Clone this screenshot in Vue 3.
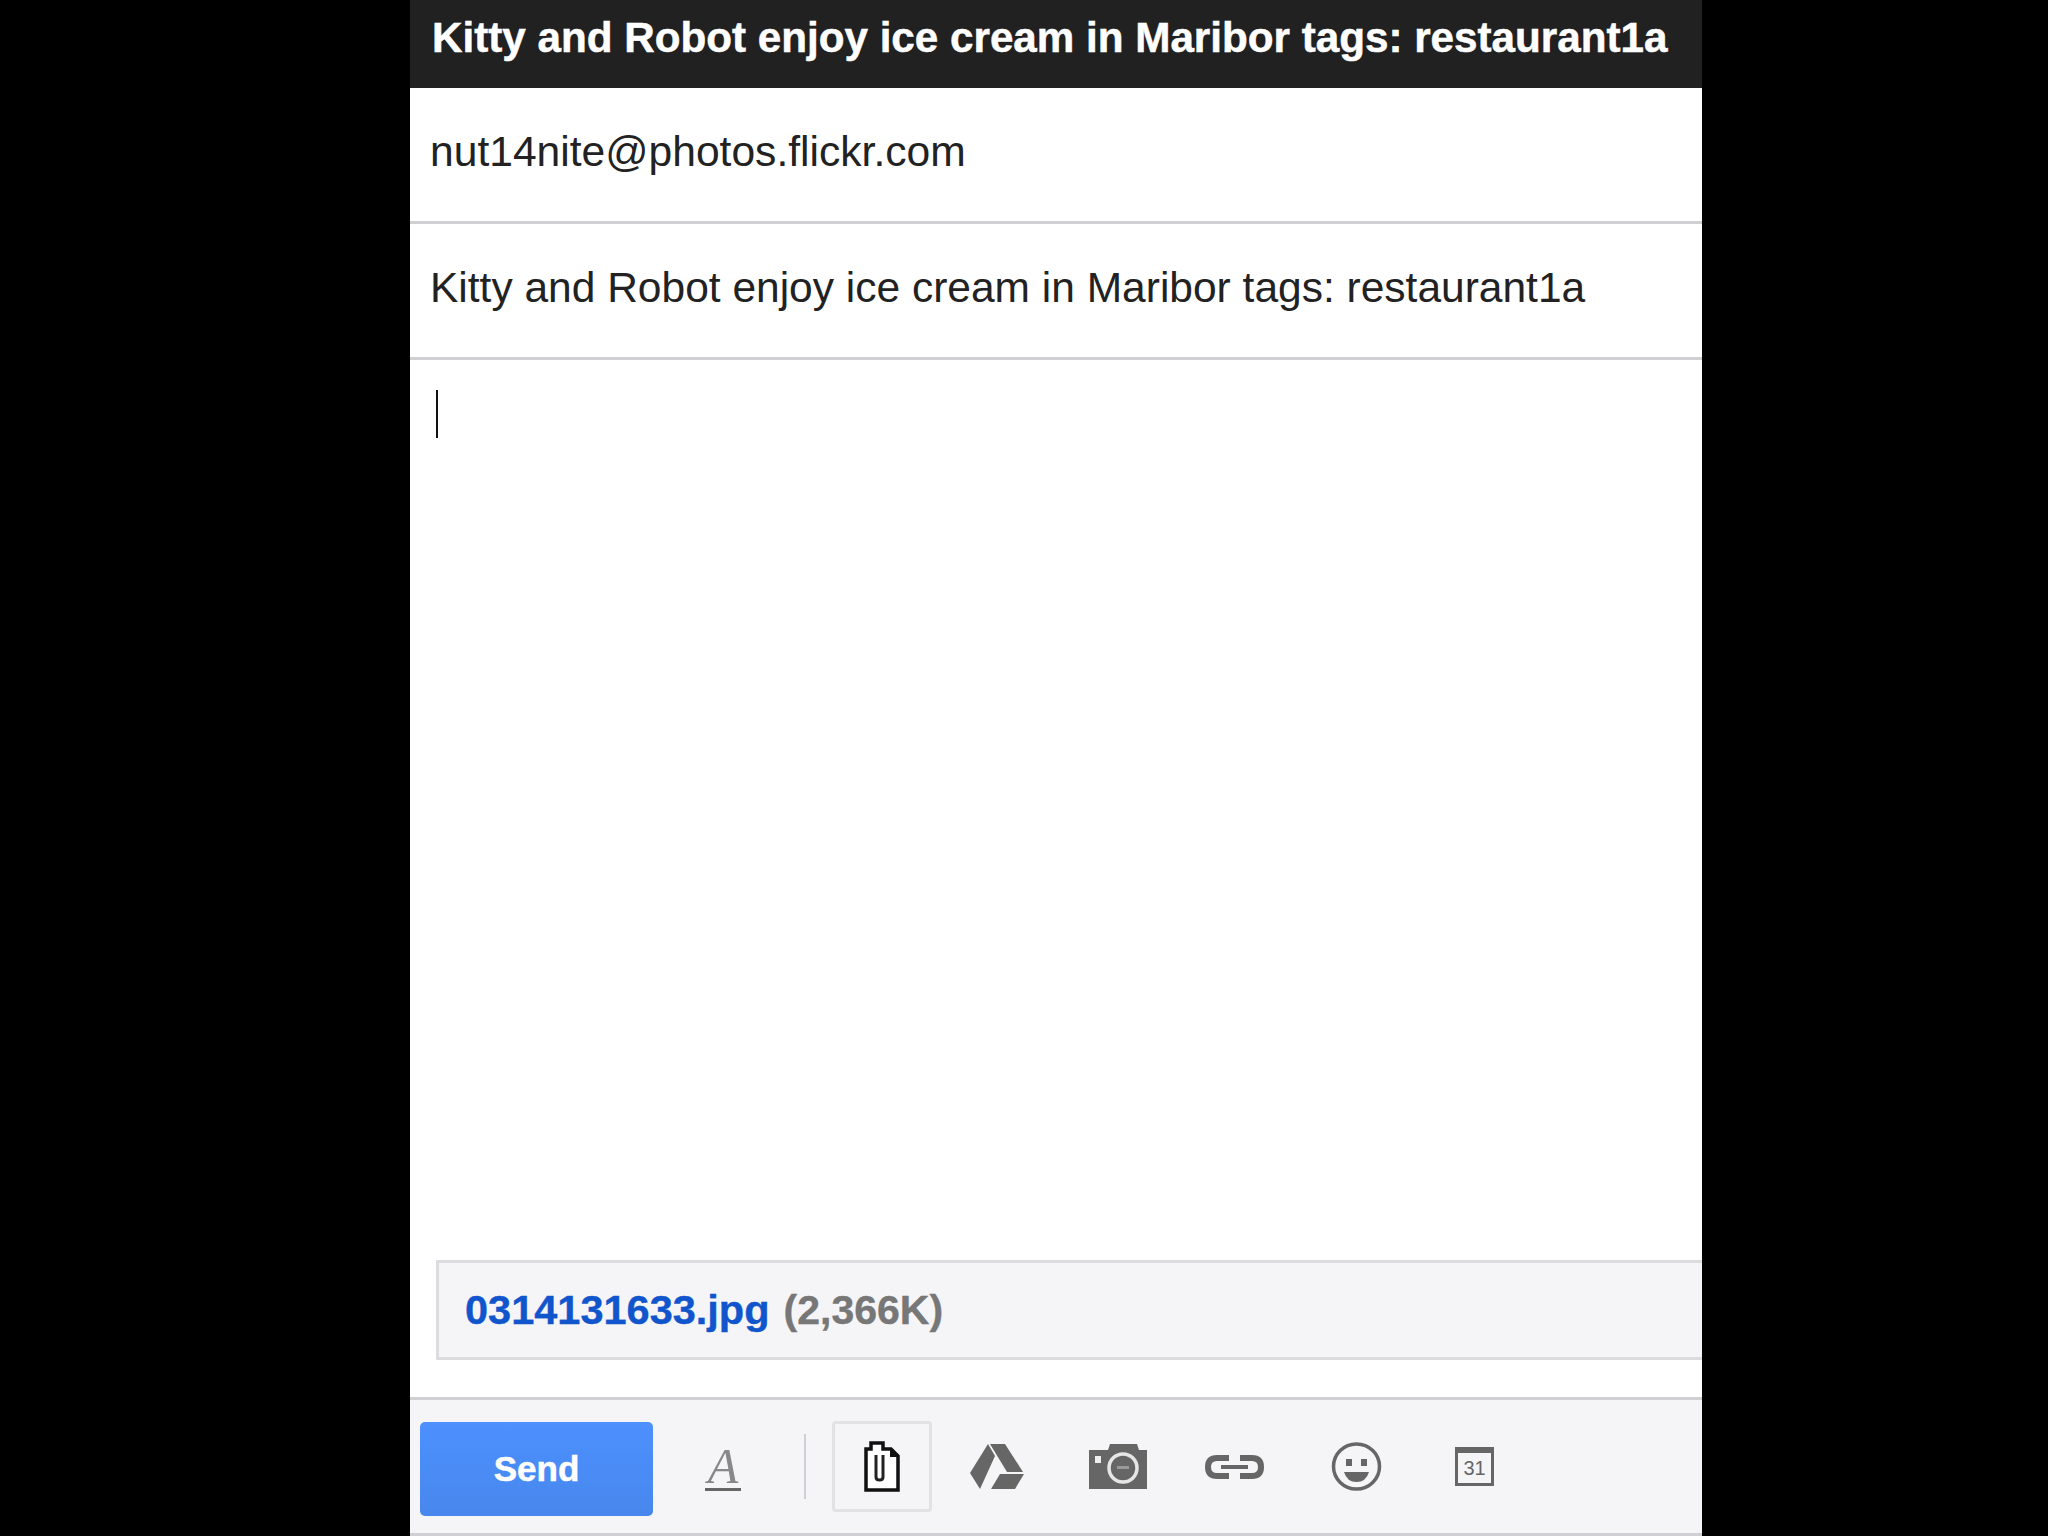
<script setup>
const title = 'Kitty and Robot enjoy ice cream in Maribor tags: restaurant1a';
const recipient = 'nut14nite@photos.flickr.com';
</script>

<template>
  <div class="compose">
    <div class="title-bar">{{ title }}</div>
    <div class="field">{{ recipient }}</div>
    <div class="field">{{ title }}</div>

    <div class="body">
      <div class="caret"></div>
      <div class="attachment">
        <span class="file-name">0314131633.jpg</span>
        <span class="file-size">(2,366K)</span>
      </div>
    </div>

    <div class="toolbar">
      <button class="send">Send</button>
      <div class="format"><span class="format-a">A</span></div>
      <div class="divider"></div>
      <div class="attach-btn">
        <svg width="36" height="51" viewBox="0 0 36 51">
          <path d="M2 8H7V2H19V8H27L34 15V49H2Z" fill="#fff" stroke="#111" stroke-width="3.5" />
          <path d="M26 7V16H35" fill="#111" />
          <path d="M12 14V36Q12 39 15.5 39Q19 39 19 36V14" fill="none" stroke="#222" stroke-width="3" />
        </svg>
      </div>

      <svg class="ic drive" width="54" height="45" viewBox="0 0 54 45">
        <path d="M18 0L25 12L10 45L0 29Z" fill="#666" />
        <path d="M20 0H35L53 28H37Z" fill="#666" />
        <path d="M21 45L30 30H54L45 45Z" fill="#666" />
      </svg>

      <svg class="ic camera" width="58" height="45" viewBox="0 0 58 45">
        <path d="M0 6H19L21 0H48L50 6H58V45H0Z" fill="#666" />
        <rect x="6" y="12" width="6" height="7" fill="#eee" />
        <circle cx="34" cy="24" r="14" fill="#666" stroke="#e6e6e6" stroke-width="3.5" />
        <rect x="28" y="22" width="12" height="3" fill="#999" />
      </svg>

      <svg class="ic link" width="59" height="24" viewBox="0 0 59 24">
        <path d="M24 3H12Q3 3 3 12Q3 21 12 21H24" fill="none" stroke="#666" stroke-width="6" />
        <path d="M35 3H47Q56 3 56 12Q56 21 47 21H35" fill="none" stroke="#666" stroke-width="6" />
        <rect x="16" y="10" width="27" height="4" fill="#666" />
      </svg>

      <svg class="ic smile" width="51" height="49" viewBox="0 0 51 49">
        <ellipse cx="25.5" cy="24.5" rx="23" ry="22.5" fill="#f5f5f7" stroke="#666" stroke-width="3.5" />
        <rect x="15" y="17" width="6" height="7" fill="#666" />
        <rect x="30" y="17" width="6" height="7" fill="#666" />
        <path d="M13 30H38Q35 40 25.5 40Q16 40 13 30Z" fill="#666" />
      </svg>

      <div class="calendar">31</div>
    </div>
  </div>
</template>

<style scoped>
.compose {
  margin-left: 410px;
  width: 1292px;
  height: 1536px;
  display: flex;
  flex-direction: column;
  background: #fff;
  font-family: "Liberation Sans", Arial, sans-serif;
  color: #222;
}

.title-bar {
  height: 88px;
  box-sizing: border-box;
  padding: 0 0 12px 22px;
  display: flex;
  align-items: center;
  background: #212121;
  color: #fff;
  font-size: 42.2px;
  font-weight: 700;
  white-space: nowrap;
  -webkit-text-stroke: 0.5px #fff;
}

.field {
  height: 136px;
  box-sizing: border-box;
  padding: 0 0 6px 20px;
  display: flex;
  align-items: center;
  border-bottom: 3px solid #d0d0d4;
  font-size: 42.6px;
  white-space: nowrap;
}

.field + .field {
  font-size: 42.5px;
}

.body {
  flex: 1;
  display: flex;
  flex-direction: column;
  padding: 30px 0 37px 26px;
}

.caret {
  width: 2px;
  height: 48px;
  background: #111;
}

.attachment {
  margin-top: auto;
  height: 100px;
  box-sizing: border-box;
  padding-left: 26px;
  display: flex;
  align-items: center;
  gap: 14px;
  background: #f5f5f7;
  border: 3px solid #dcdcdf;
  border-right: 0;
  font-size: 41.5px;
  font-weight: 700;
  -webkit-text-stroke: 0.4px;
}

.file-name {
  color: #1155cc;
}

.file-size {
  color: #777;
  font-size: 41px;
}

.toolbar {
  height: 139px;
  box-sizing: border-box;
  padding-left: 10px;
  display: flex;
  align-items: center;
  background: #f5f5f7;
  border-top: 3px solid #d0d0d4;
  border-bottom: 3px solid #d0d0d4;
}

.send {
  width: 233px;
  height: 94px;
  margin-top: 4px;
  padding: 0;
  border: 0;
  border-radius: 5px;
  background: linear-gradient(#4d90fe, #4787ed);
  color: #fff;
  font-family: inherit;
  font-size: 35px;
  font-weight: 700;
  -webkit-text-stroke: 0.5px #fff;
}

.format {
  margin-left: 52px;
  width: 36px;
  height: 46px;
  display: flex;
  justify-content: center;
  align-items: flex-end;
  border-bottom: 3px solid #666;
}

.format-a {
  font-family: "Liberation Serif", serif;
  font-style: italic;
  font-size: 50px;
  line-height: 44px;
  color: #888;
}

.divider {
  margin-left: 63px;
  width: 2px;
  height: 65px;
  background: #d0d0d4;
}

.attach-btn {
  margin-left: 26px;
  width: 100px;
  height: 91px;
  box-sizing: border-box;
  display: flex;
  justify-content: center;
  align-items: center;
  border: 3px solid #e2e2e4;
  border-radius: 4px;
}

.ic {
  display: block;
  flex: none;
}

.drive {
  margin-left: 38px;
}

.camera {
  margin-left: 65px;
}

.link {
  margin-left: 58px;
}

.smile {
  margin-left: 67px;
}

.calendar {
  margin-left: 73px;
  width: 39px;
  height: 39px;
  box-sizing: border-box;
  display: flex;
  justify-content: center;
  align-items: center;
  border: 3px solid #666;
  border-top-width: 6px;
  color: #666;
  font-size: 20px;
}
</style>

<style>
html,
body {
  margin: 0;
  height: 100%;
  background: #000;
  overflow: hidden;
}
</style>
